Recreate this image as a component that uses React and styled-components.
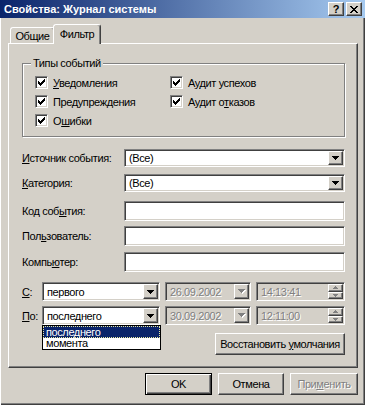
import React from 'react';
import styled, { createGlobalStyle, css } from 'styled-components';

const Global = createGlobalStyle`
  html, body { margin: 0; padding: 0; background: #d4d0c8; }
  body { font-family: "Liberation Sans", Arial, sans-serif; font-size: 11px; color: #000; }
  * { box-sizing: border-box; }
`;

const sunken = css`
  border: 1px solid;
  border-color: #808080 #fff #fff #808080;
  box-shadow: inset 1px 1px #404040, inset -1px -1px #d4d0c8;
`;

const raised = css`
  border: 1px solid;
  border-color: #fff #404040 #404040 #fff;
  box-shadow: inset -1px -1px #808080;
`;

const Window = styled.div`
  width: 365px;
  height: 405px;
  background: #d4d0c8;
  display: flex;
  flex-direction: column;
  overflow: hidden;
  box-shadow: inset 1px 0 #fff, inset -1px -1px #404040, inset -2px -2px #808080;
`;

const TitleBar = styled.div`
  height: 18px;
  display: flex;
  align-items: center;
  padding: 0 3px 0 4px;
  background: linear-gradient(to right, #0a246a, #a6caf0);
  color: #fff;
  font-weight: bold;
  font-size: 11px;
`;

const Title = styled.span`
  flex: 1;
  white-space: nowrap;
`;

const CaptionButton = styled.div`
  width: 16px;
  height: 14px;
  margin-left: ${p => p.$ml || 0}px;
  background: #d4d0c8;
  color: #000;
  display: flex;
  align-items: center;
  justify-content: center;
  ${raised};
  font-size: 11px;
  font-weight: bold;
  line-height: 1;
`;

const Body = styled.div`
  flex: 1;
  display: flex;
  flex-direction: column;
  padding: 6px 7px 0 8px;
  letter-spacing: -0.4px;
`;

const TabStrip = styled.div`
  display: flex;
  align-items: flex-end;
  height: 19px;
  padding-left: 2px;
  position: relative;
  z-index: 1;
`;

const Tab = styled.div`
  width: ${p => p.$w}px;
  height: ${p => (p.$active ? 20 : 16)}px;
  margin-bottom: ${p => (p.$active ? -1 : 0)}px;
  margin-left: ${p => p.$ml || 0}px;
  padding-bottom: ${p => (p.$active ? 2 : 0)}px;
  background: #d4d0c8;
  border: 1px solid;
  border-bottom: none;
  border-color: #fff #404040 transparent #fff;
  border-radius: 3px 3px 0 0;
  box-shadow: inset -1px 0 #808080;
  display: flex;
  align-items: center;
  justify-content: center;
  position: relative;
  z-index: ${p => (p.$active ? 2 : 1)};
`;

const Panel = styled.div`
  width: 350px;
  height: 325px;
  border: 1px solid;
  border-color: #fff #404040 #404040 #fff;
  box-shadow: inset -1px -1px #808080;
  padding: 13px 12px 0 13px;
  display: flex;
  flex-direction: column;
`;

const Group = styled.fieldset`
  margin: 0;
  padding: 0;
  border: 1px solid #808080;
  box-shadow: inset 1px 1px #fff, 1px 1px #fff;
  min-width: 0;
`;

const Legend = styled.legend`
  margin-left: 8px;
  padding: 0 2px;
  line-height: 13px;
  background: #d4d0c8;
`;

const CheckGrid = styled.div`
  display: grid;
  grid-template-columns: 135px 1fr;
  grid-template-rows: repeat(3, 19px);
  grid-auto-flow: column;
  padding: 3px 0 6px 12px;
`;

const CheckItem = styled.div`
  display: flex;
  align-items: center;
  gap: 5px;
`;

const Box = styled.div`
  width: 13px;
  height: 13px;
  background: #fff;
  ${sunken};
  display: flex;
  align-items: center;
  justify-content: center;
`;

const K = styled.span`
  text-decoration: underline;
`;

const FieldRow = styled.div`
  display: grid;
  grid-template-columns: 102px 1fr;
  align-items: center;
  height: ${p => p.$h}px;
  margin-top: ${p => p.$mt}px;
`;

const Field = styled.div`
  height: 100%;
  background: ${p => (p.$disabled ? '#d4d0c8' : '#fff')};
  ${sunken};
  padding: 1px;
  display: flex;
  align-items: stretch;
  position: relative;
  width: ${p => (p.$w ? `${p.$w}px` : 'auto')};
  margin-left: ${p => p.$ml || 0}px;
  flex: none;
`;

const FieldText = styled.span`
  flex: 1;
  padding-left: ${p => p.$pl ?? 3}px;
  display: flex;
  align-items: center;
  white-space: nowrap;
  color: ${p => (p.$disabled ? '#808080' : '#000')};
  text-shadow: ${p => (p.$disabled ? '1px 1px 0 #fff' : 'none')};
`;

const DropBtn = styled.div`
  width: 15px;
  background: #d4d0c8;
  ${raised};
  display: flex;
  align-items: center;
  justify-content: center;
`;

const Spin = styled.div`
  width: 15px;
  display: flex;
  flex-direction: column;
`;

const SpinBtn = styled.div`
  flex: 1;
  background: #d4d0c8;
  ${raised};
  display: flex;
  align-items: center;
  justify-content: center;
`;

const DateRow = styled.div`
  display: flex;
  align-items: stretch;
  height: 19px;
  margin-top: ${p => p.$mt}px;
`;

const DateLabel = styled.span`
  width: 20px;
  display: flex;
  align-items: center;
  flex: none;
`;

const DropList = styled.div`
  position: absolute;
  left: -1px;
  top: calc(100% + 1px);
  width: 119px;
  background: #fff;
  border: 1px solid #000;
  z-index: 5;
`;

const ListItem = styled.div`
  height: ${p => p.$h}px;
  line-height: ${p => p.$h - 2}px;
  padding-left: 2px;
  border: 1px ${p => (p.$sel ? 'dotted #e8e8a0' : 'solid transparent')};
  background: ${p => (p.$sel ? '#0a246a' : '#fff')};
  color: ${p => (p.$sel ? '#fff' : '#000')};
`;

const PushButton = styled.div`
  width: ${p => p.$w}px;
  height: 22px;
  background: #d4d0c8;
  ${raised};
  display: flex;
  align-items: center;
  justify-content: center;
  white-space: nowrap;
  color: ${p => (p.$disabled ? '#808080' : '#000')};
  text-shadow: ${p => (p.$disabled ? '1px 1px 0 #fff' : 'none')};
  ${p =>
    p.$default &&
    css`
      border: 1px solid #000;
      box-shadow: inset 1px 1px #fff, inset -1px -1px #404040, inset -2px -2px #808080;
    `}
`;

const RestoreRow = styled.div`
  display: flex;
  justify-content: flex-end;
  margin-top: 8px;
`;

const ButtonRow = styled.div`
  display: flex;
  justify-content: flex-end;
  gap: 6px;
  margin-top: 5px;
`;

const Arrow = ({ color = '#000' }) => (
  <svg width="7" height="4" viewBox="0 0 7 4" shapeRendering="crispEdges">
    <path d="M0 0h7v1h-1v1h-1v1h-1v1h-1v-1h-1v-1h-1v-1h-1z" fill={color} />
  </svg>
);

const GrayArrow = () => (
  <svg width="8" height="5" viewBox="0 0 8 5" shapeRendering="crispEdges">
    <path d="M1 1h7v1h-1v1h-1v1h-1v1h-1v-1h-1v-1h-1v-1h-1z" fill="#fff" />
    <path d="M0 0h7v1h-1v1h-1v1h-1v1h-1v-1h-1v-1h-1v-1h-1z" fill="#808080" />
  </svg>
);

const SpinUp = () => (
  <svg width="5" height="3" viewBox="0 0 5 3" shapeRendering="crispEdges">
    <path d="M2 0h1v1h1v1h1v1h-5v-1h1v-1h1z" fill="#808080" />
  </svg>
);

const SpinDown = () => (
  <svg width="5" height="3" viewBox="0 0 5 3" shapeRendering="crispEdges">
    <path d="M0 0h5v1h-1v1h-1v1h-1v-1h-1v-1h-1z" fill="#808080" />
  </svg>
);

const CheckMark = () => (
  <svg width="7" height="7" viewBox="0 0 7 7" shapeRendering="crispEdges">
    <path
      d="M6 0h1v3h-1v1h-1v1h-1v1h-1v1h-1v-1h-1v-1h-1v-3h1v1h1v1h1v-1h1v-1h1v-1h1z"
      fill="#000"
    />
  </svg>
);

const CloseGlyph = () => (
  <svg width="8" height="7" viewBox="0 0 8 7" shapeRendering="crispEdges">
    <path
      d="M0 0h2v1h1v1h2v-1h1v-1h2v1h-1v1h-1v1h-1v1h1v1h1v1h1v1h-2v-1h-1v-1h-2v1h-1v1h-2v-1h1v-1h1v-1h1v-1h-1v-1h-1v-1h-1z"
      fill="#000"
    />
  </svg>
);

const Check = ({ children }) => (
  <CheckItem>
    <Box>
      <CheckMark />
    </Box>
    <span>{children}</span>
  </CheckItem>
);

const Combo = ({ children, w, ml, list }) => (
  <Field $w={w} $ml={ml}>
    <FieldText>{children}</FieldText>
    <DropBtn>
      <Arrow />
    </DropBtn>
    {list}
  </Field>
);

const DatePick = ({ children }) => (
  <Field $w={86} $ml={5} $disabled>
    <FieldText $disabled>{children}</FieldText>
    <DropBtn>
      <GrayArrow />
    </DropBtn>
  </Field>
);

const TimePick = ({ children }) => (
  <Field $w={89} $ml={5} $disabled>
    <FieldText $disabled>{children}</FieldText>
    <Spin>
      <SpinBtn>
        <SpinUp />
      </SpinBtn>
      <SpinBtn>
        <SpinDown />
      </SpinBtn>
    </Spin>
  </Field>
);

export default function App() {
  return (
    <>
      <Global />
      <Window>
        <TitleBar>
          <Title>Свойства: Журнал системы</Title>
          <CaptionButton>?</CaptionButton>
          <CaptionButton $ml={2}>
            <CloseGlyph />
          </CaptionButton>
        </TitleBar>
        <Body>
          <TabStrip>
            <Tab $w={45}>Общие</Tab>
            <Tab $w={48} $ml={-2} $active>
              Фильтр
            </Tab>
          </TabStrip>
          <Panel>
            <Group>
              <Legend>Типы событий</Legend>
              <CheckGrid>
                <Check>
                  <K>У</K>ведомления
                </Check>
                <Check>
                  Пре<K>д</K>упреждения
                </Check>
                <Check>
                  О<K>ш</K>ибки
                </Check>
                <Check>
                  А<K>у</K>дит успехов
                </Check>
                <Check>
                  Аудит о<K>т</K>казов
                </Check>
              </CheckGrid>
            </Group>

            <FieldRow $h={18} $mt={12}>
              <span>
                <K>И</K>сточник события:
              </span>
              <Combo>(Все)</Combo>
            </FieldRow>
            <FieldRow $h={18} $mt={7}>
              <span>
                <K>К</K>атегория:
              </span>
              <Combo>(Все)</Combo>
            </FieldRow>
            <FieldRow $h={20} $mt={9}>
              <span>
                Код соб<K>ы</K>тия:
              </span>
              <Field />
            </FieldRow>
            <FieldRow $h={20} $mt={5}>
              <span>
                Пол<K>ь</K>зователь:
              </span>
              <Field />
            </FieldRow>
            <FieldRow $h={20} $mt={6}>
              <span>
                Компь<K>ю</K>тер:
              </span>
              <Field />
            </FieldRow>

            <DateRow $mt={10}>
              <DateLabel>
                <K>С</K>:
              </DateLabel>
              <Combo w={118}>первого</Combo>
              <DatePick>26.09.2002</DatePick>
              <TimePick>14:13:41</TimePick>
            </DateRow>
            <DateRow $mt={5}>
              <DateLabel>
                <K>П</K>о:
              </DateLabel>
              <Combo
                w={118}
                list={
                  <DropList>
                    <ListItem $h={12} $sel>
                      последнего
                    </ListItem>
                    <ListItem $h={11}>момента</ListItem>
                  </DropList>
                }
              >
                последнего
              </Combo>
              <DatePick>30.09.2002</DatePick>
              <TimePick>12:11:00</TimePick>
            </DateRow>
            <RestoreRow>
              <PushButton $w={130}>
                <span>
                  Восстановить <K>у</K>молчания
                </span>
              </PushButton>
            </RestoreRow>
          </Panel>
          <ButtonRow>
            <PushButton $w={67} $default>
              OK
            </PushButton>
            <PushButton $w={66}>Отмена</PushButton>
            <PushButton $w={68} $disabled>
              <span>
                При<K>м</K>енить
              </span>
            </PushButton>
          </ButtonRow>
        </Body>
      </Window>
    </>
  );
}
